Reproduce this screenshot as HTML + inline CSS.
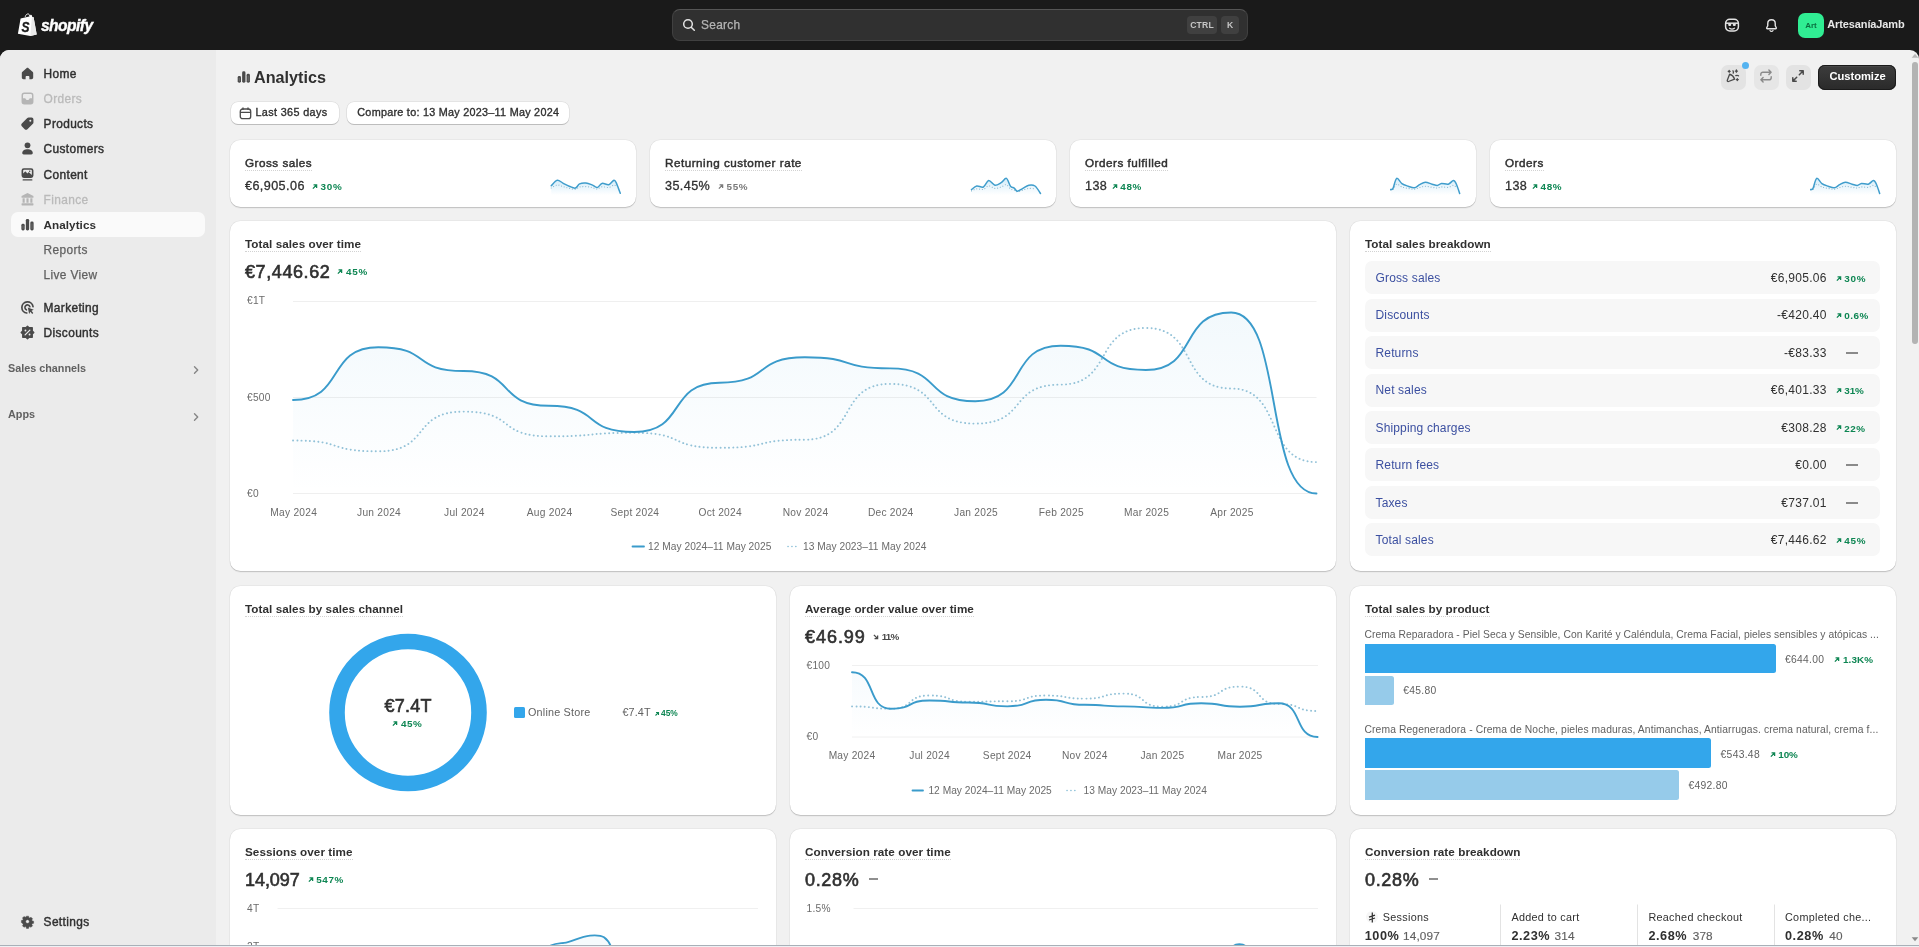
<!DOCTYPE html>
<html lang="en"><head><meta charset="utf-8"><title>Analytics</title>
<style>
*{box-sizing:border-box}
html,body{margin:0;padding:0}
body{width:1919px;height:947px;overflow:hidden;position:relative;background:#1a1a1a;font-family:"Liberation Sans",sans-serif;font-size:11.7px;color:#303030;line-height:18px}
.a{position:absolute}
.t{position:absolute;white-space:nowrap;line-height:18px;height:18px}
.b{font-weight:700}
.m{-webkit-text-stroke:.45px currentColor;letter-spacing:.42px}
.ttl.m{letter-spacing:.5px}
.sub{color:#616161}
.g{color:#0e8653}
svg{display:block;overflow:visible}
.ar{display:inline-block;width:7.5px;height:7.5px;vertical-align:-0.3px;margin-right:2.2px}
#top{left:0;top:0;width:1919px;height:50px;background:#1a1a1a}
.nav{position:absolute;left:43.6px;margin-top:.7px;white-space:nowrap;line-height:18px;height:18px;font-weight:400;font-size:11.9px;color:#303030;-webkit-text-stroke:.42px currentColor;letter-spacing:.36px}
.nav.dis{color:#bababa;-webkit-text-stroke:.3px #bababa}
.nav.sel{font-weight:700;font-size:11.7px;-webkit-text-stroke:0;letter-spacing:.05px}
.nav.subn{font-weight:400;color:#616161;-webkit-text-stroke:.25px #616161;letter-spacing:.35px}
.ico{position:absolute;left:18.8px;width:17px;height:17px;margin-top:.9px;fill:#4a4a4a}
.ico.dis{fill:#b5b5b5}
.sec{position:absolute;left:8px;font-size:10.8px;font-weight:700;color:#616161;white-space:nowrap;line-height:16px}
.card{position:absolute;background:#fff;border-radius:10.5px;box-shadow:0 1px 0 0 rgba(26,26,26,.14),0 2px 0 0 rgba(26,26,26,.03),0 0 0 .6px rgba(0,0,0,.07)}
.ttl{position:absolute;white-space:nowrap;font-weight:700;font-size:11.7px;line-height:18px;height:18px;color:#303030;border-bottom:0;letter-spacing:.06px}
.ttl:after{content:"";position:absolute;left:0;right:0;bottom:1px;border-bottom:1px dotted #d2d2d2}
.big{position:absolute;white-space:nowrap;font-weight:400;-webkit-text-stroke:.62px currentColor;font-size:18px;line-height:24px;height:24px;color:#303030;letter-spacing:.1px}
.trend{position:absolute;white-space:nowrap;font-weight:700;font-size:9.9px;line-height:16px;height:16px;color:#0e8653;letter-spacing:.7px;margin-top:.3px}
.trend.n{color:#7a7a7a}
.ax{position:absolute;white-space:nowrap;font-size:10.2px;line-height:14px;height:14px;color:#6b6b6b;letter-spacing:.25px;margin-top:1.3px}
.lg{letter-spacing:.03px}
.axc{transform:translateX(-50%)}
.brow{position:absolute;left:1365px;margin-top:-.5px;width:515px;height:33px;background:#f7f7f7;border-radius:7px}
.brow .l{position:absolute;left:10.5px;top:7.8px;line-height:18px;font-size:12px;color:#3b4fa0;letter-spacing:.15px;white-space:nowrap}
.brow .v{position:absolute;right:53.2px;top:7.8px;line-height:18px;font-size:12px;color:#303030;letter-spacing:.3px;white-space:nowrap}
.brow .p{position:absolute;left:469.6px;top:9.8px;line-height:16px;font-size:9.9px;font-weight:700;color:#0e8653;white-space:nowrap;letter-spacing:.8px}
.brow .d{display:none}
.dash{position:absolute;height:1.5px;width:9.5px;background:#8f8f8f}
.mv{font-size:12.6px;-webkit-text-stroke:.3px #303030;letter-spacing:.42px;margin-top:0}
.pl{font-size:10.300px;letter-spacing:.05px;margin-top:.8px}
.pv{font-size:10.300px;letter-spacing:.3px}
.cl{font-size:10.800px;letter-spacing:.3px;color:#303030}
.cv{font-size:12.700px;letter-spacing:.55px}
.cn{font-size:11.800px;letter-spacing:.15px;margin-left:-1px;-webkit-text-stroke:.15px currentColor}
#wrap{position:absolute;left:0;top:0;width:1919px;height:947px;will-change:transform;transform:translateZ(0)}

.ttl.m{letter-spacing:.5px}

</style></head>
<body>
<div id="wrap">
<div id="top" class="a">
  <svg class="a" style="left:17px;top:13px" width="21" height="24" viewBox="0 0 21 24">
    <path d="M3.6 5.6L12.2 3.6L13.2 2.2C13.6 1.6 14.6 1.7 14.9 2.5L15.3 4.1L16.6 4.2L19.7 21.4L13.3 23L0.9 20.7Z" fill="#fff"/>
    <path d="M14.9 4.1L16.6 4.2L19.7 21.4L13.3 23Z" fill="#e8e8e8"/>
    <path d="M8.2 3.9C8.6 2 9.8 .9 11 .9C11.9 .9 12.4 1.6 12.6 3" fill="none" stroke="#fff" stroke-width=".9"/>
    <text transform="translate(4.400,18.600) scale(.8,1)" font-family="Liberation Sans, sans-serif" font-weight="700" font-style="italic" font-size="15" stroke="#1a1a1a" stroke-width=".35" fill="#1a1a1a">S</text>
  </svg>
  <div class="t" style="left:40.8px;top:13px;height:24px;line-height:24px;font-size:17.3px;font-weight:700;font-style:italic;color:#fff;letter-spacing:-.6px;-webkit-text-stroke:.45px #fff;transform:scaleX(.9);transform-origin:0 50%">shopify</div>
  <div class="a" style="left:672px;top:9px;width:576px;height:32px;background:#303030;border:1px solid #404040;border-top-color:#555;border-radius:8px"></div>
  <svg class="a" style="left:682px;top:18px" width="14" height="14" viewBox="0 0 14 14"><circle cx="6" cy="6" r="4.3" fill="none" stroke="#e3e3e3" stroke-width="1.5"/><path d="M9.2 9.2L12.3 12.3" stroke="#e3e3e3" stroke-width="1.5" stroke-linecap="round"/></svg>
  <div class="t" style="left:701px;top:16px;color:#b5b5b5;font-size:11.9px;-webkit-text-stroke:.25px #b5b5b5;letter-spacing:.3px">Search</div>
  <div class="a" style="left:1187px;top:16px;width:30px;height:18px;background:#404040;border-radius:4px;color:#c6c6c6;font-size:8.6px;font-weight:700;line-height:18px;text-align:center;letter-spacing:.2px">CTRL</div>
  <div class="a" style="left:1221px;top:16px;width:18px;height:18px;background:#404040;border-radius:4px;color:#c6c6c6;font-size:8.6px;font-weight:700;line-height:18px;text-align:center">K</div>
  <!-- sidekick -->
  <svg class="a" style="left:1724px;top:17px" width="16" height="16" viewBox="0 0 16 16">
    <rect x="1.6" y="2.2" width="12.8" height="11.8" rx="4.2" fill="none" stroke="#e3e3e3" stroke-width="1.5"/>
    <path d="M2 6.2H14" stroke="#e3e3e3" stroke-width="1.5"/>
    <rect x="4.2" y="6.6" width="3" height="2.3" rx=".8" fill="#e3e3e3"/><rect x="8.8" y="6.6" width="3" height="2.3" rx=".8" fill="#e3e3e3"/>
    <path d="M5.6 11.2C7 12.2 9 12.2 10.400 11.2" fill="none" stroke="#e3e3e3" stroke-width="1.2" stroke-linecap="round"/>
  </svg>
  <!-- bell -->
  <svg class="a" style="left:1763.500px;top:18px" width="15" height="15" viewBox="0 0 16 16">
    <path d="M8 1.800C5.500 1.800 4 3.700 4 6V8.300L2.900 10.400C2.700 10.900 3 11.400 3.500 11.400H12.500C13 11.400 13.300 10.900 13.100 10.400L12 8.300V6C12 3.700 10.500 1.800 8 1.800Z" fill="none" stroke="#e3e3e3" stroke-width="1.5" stroke-linejoin="round"/>
    <path d="M6.400 13.300C6.800 14 7.400 14.300 8 14.300S9.200 14 9.600 13.300" fill="none" stroke="#e3e3e3" stroke-width="1.4" stroke-linecap="round"/>
  </svg>
  <div class="a" style="left:1798px;top:13px;width:26px;height:25px;background:#30ed93;border-radius:7px;color:#0a7040;font-size:8px;font-weight:700;line-height:25px;text-align:center;letter-spacing:-.1px">Art</div>
  <div class="t" style="left:1827.300px;top:15px;color:#e8e8e8;font-weight:700;font-size:11px;letter-spacing:-.12px">ArtesaníaJamb</div>
</div>

<div class="a" id="frame" style="left:0;top:50px;width:1919px;height:897px;background:#f1f1f1;border-radius:9px 9px 0 0"></div>
<div class="a" id="side" style="left:0;top:50px;width:216px;height:897px;background:#ebebeb;border-radius:9px 0 0 0"></div>
<div class="a" style="left:11px;top:212px;width:194px;height:25px;background:#fafafa;border-radius:7px"></div>
<svg class="ico " style="top:64px" viewBox="0 0 20 20"><path d="M3.300 9.400c0-.6.300-1.200.8-1.600l4.700-4.100c.7-.6 1.700-.6 2.400 0l4.700 4.100c.5.400.8 1 .8 1.600v5.400c0 1.100-.9 2-2 2h-2.500v-2.800c0-.7-.5-1.200-1.200-1.200h-2c-.7 0-1.200.5-1.200 1.200v2.800H5.300c-1.100 0-2-.9-2-2z"/></svg>
<div class="nav " style="top:64px">Home</div>
<svg class="ico dis" style="top:89px" viewBox="0 0 20 20"><path fill-rule="evenodd" d="M3 6.250A3.250 3.250 0 0 1 6.250 3h7.500A3.250 3.250 0 0 1 17 6.250v7.500A3.250 3.250 0 0 1 13.750 17h-7.500A3.250 3.250 0 0 1 3 13.750zM6.250 4.700C5.400 4.700 4.700 5.400 4.700 6.250V9.600h2.300c.4 0 .75.3.85.7.2.9 1.100 1.550 2.150 1.550s1.950-.65 2.150-1.550c.1-.4.450-.7.850-.7H15.300V6.250c0-.85-.7-1.550-1.550-1.550z"/></svg>
<div class="nav dis" style="top:89px">Orders</div>
<svg class="ico " style="top:114px" viewBox="0 0 20 20"><path fill-rule="evenodd" d="M11.300 3c-.6 0-1.150.25-1.550.65L3.300 10.100c-.9.900-.9 2.300 0 3.200l3.400 3.400c.9.900 2.300.9 3.200 0l6.450-6.450c.4-.4.650-.95.650-1.550V5.200C17 4 16 3 14.800 3zM13.300 7.900a1.200 1.200 0 1 0 0-2.400 1.200 1.200 0 0 0 0 2.400z"/></svg>
<div class="nav " style="top:114px">Products</div>
<svg class="ico " style="top:139px" viewBox="0 0 20 20"><circle cx="10" cy="6.300" r="3.400"/><path d="M3.800 15.300c0-2.700 2.700-4.500 6.200-4.500s6.200 1.800 6.200 4.500c0 .9-.7 1.700-1.700 1.700H5.500c-1 0-1.700-.8-1.700-1.700z"/></svg>
<div class="nav " style="top:139px">Customers</div>
<svg class="ico " style="top:165px" viewBox="0 0 20 20"><path fill-rule="evenodd" d="M3 5.200A2.700 2.700 0 0 1 5.700 2.500h8.600A2.700 2.700 0 0 1 17 5.200v6.100a2.700 2.700 0 0 1-2.700 2.700H5.700A2.700 2.700 0 0 1 3 11.300zM4.900 8.700l2-1.900c.3-.3.800-.3 1.100 0l1.900 1.900 1-1c.3-.3.800-.3 1.100 0l3.100 2.900V5.400c0-.6-.4-1-1-1H5.900c-.6 0-1 .4-1 1zM12.600 5.300a.9.900 0 1 1 0 1.800.9.900 0 0 1 0-1.800z"/><rect x="4.200" y="15.600" width="11.600" height="1.500" rx=".7"/></svg>
<div class="nav " style="top:165px">Content</div>
<svg class="ico dis" style="top:190px" viewBox="0 0 20 20"><path d="M10 2.400l7 3.400v2H3v-2z"/><rect x="4.200" y="8.600" width="2.500" height="5.200"/><rect x="8.750" y="8.600" width="2.500" height="5.200"/><rect x="13.300" y="8.600" width="2.500" height="5.200"/><rect x="3" y="14.400" width="14" height="2.600" rx=".7"/></svg>
<div class="nav dis" style="top:190px">Finance</div>
<svg class="ico " style="top:215px" viewBox="0 0 20 20"><rect x="2.800" y="9.200" width="3.900" height="7.800" rx="1.700"/><rect x="8.050" y="3.400" width="3.900" height="13.600" rx="1.700"/><rect x="13.300" y="6.400" width="3.900" height="10.600" rx="1.700"/><rect x="4.100" y="11" width="1.300" height="4.200" rx=".6" fill="#6a6a6a"/><rect x="14.600" y="8.400" width="1.300" height="6.800" rx=".6" fill="#6a6a6a"/></svg>
<div class="nav sel" style="top:215px">Analytics</div>
<div class="nav subn" style="top:240px">Reports</div>
<div class="nav subn" style="top:265px">Live View</div>
<svg class="ico " style="top:298px" viewBox="0 0 20 20"><path d="M9.200 16.500A6.600 6.600 0 1 1 16.500 9" fill="none" stroke="#4a4a4a" stroke-width="2" stroke-linecap="round"/><path d="M8.700 12.700A3 3 0 1 1 12.800 9" fill="none" stroke="#4a4a4a" stroke-width="1.900" stroke-linecap="round"/><path d="M10.400 10.100l7 2.500-2.700 1.300 2.100 2.600-1.300 1-2.100-2.600-1.500 2.600z"/></svg>
<div class="nav " style="top:298px">Marketing</div>
<svg class="ico " style="top:323px" viewBox="0 0 20 20"><path d="M10.0 2.6L11.8 4.4L15.6 4.4L15.6 8.2L17.4 10.0L15.6 11.8L15.6 15.6L11.8 15.6L10.0 17.4L8.2 15.6L4.4 15.6L4.4 11.8L2.6 10.0L4.4 8.2L4.4 4.4L8.2 4.4Z" stroke="#4a4a4a" stroke-width="1.600" stroke-linejoin="round"/><path d="M7.200 12.800l5.600-5.600" stroke="#ebebeb" stroke-width="1.500" stroke-linecap="round"/><circle cx="7.600" cy="7.700" r="1.100" fill="#ebebeb"/><circle cx="12.400" cy="12.300" r="1.100" fill="#ebebeb"/></svg>
<div class="nav " style="top:323px">Discounts</div>
<svg class="ico " style="top:912px;transform:scale(.9)" viewBox="0 0 20 20"><path fill-rule="evenodd" d="M8.600 3h2.800l.4 1.900 1.100.5 1.700-1 2 2-1 1.700.5 1.100 1.900.4v2.800l-1.900.4-.5 1.100 1 1.700-2 2-1.700-1-1.100.5-.4 1.900H8.600l-.4-1.900-1.100-.5-1.700 1-2-2 1-1.700-.5-1.100L2 11.400V8.600l1.900-.4.500-1.100-1-1.700 2-2 1.700 1 1.100-.5zM10 7.600a2.400 2.400 0 1 0 0 4.800 2.400 2.400 0 0 0 0-4.800z" stroke="#4a4a4a" stroke-width=".6" stroke-linejoin="round"/></svg>
<div class="nav " style="top:912px">Settings</div>
<div class="sec" style="top:360px">Sales channels</div>
<div class="sec" style="top:406px">Apps</div>
<svg class="a" style="left:192px;top:365px" width="8" height="10" viewBox="0 0 8 10"><path d="M2.500 1.800L5.700 5 2.500 8.200" fill="none" stroke="#858585" stroke-width="1.400" stroke-linecap="round" stroke-linejoin="round"/></svg>
<svg class="a" style="left:192px;top:412px" width="8" height="10" viewBox="0 0 8 10"><path d="M2.500 1.800L5.700 5 2.500 8.200" fill="none" stroke="#858585" stroke-width="1.400" stroke-linecap="round" stroke-linejoin="round"/></svg>
<svg class="a" style="left:236.600px;top:70.300px;fill:#4a4a4a" width="13.600" height="13.600" viewBox="2 2 16 16"><rect x="2.800" y="9.200" width="3.900" height="7.800" rx="1.700"/><rect x="8.050" y="3.400" width="3.900" height="13.600" rx="1.700"/><rect x="13.300" y="6.400" width="3.900" height="10.600" rx="1.700"/><rect x="4.100" y="11" width="1.300" height="4.200" rx=".6" fill="#6a6a6a"/><rect x="14.600" y="8.400" width="1.300" height="6.800" rx=".6" fill="#6a6a6a"/></svg>
<div class="t b" style="left:254px;top:65px;height:24px;line-height:24px;font-size:16.2px;color:#303030">Analytics</div>
<!-- filter buttons -->
<div class="a" style="left:231px;top:102px;width:108px;height:22.300px;background:#fff;border-radius:7px;box-shadow:0 1px 0 0 #bdbdbd,0 0 0 .6px #d8d8d8"></div>
<svg class="a" style="left:239px;top:106.600px" width="13" height="13" viewBox="0 0 13 13"><rect x="1.300" y="2" width="10.400" height="9.700" rx="2.300" fill="none" stroke="#4a4a4a" stroke-width="1.300"/><path d="M1.500 5.400H11.500M4 .9V2.400M9 .9V2.400" stroke="#4a4a4a" stroke-width="1.300" stroke-linecap="round"/></svg>
<div class="t" style="left:255.500px;top:103.400px;font-size:10.800px;-webkit-text-stroke:.35px #303030;letter-spacing:.36px">Last 365 days</div>
<div class="a" style="left:347px;top:102px;width:222px;height:22.300px;background:#fff;border-radius:7px;box-shadow:0 1px 0 0 #bdbdbd,0 0 0 .6px #d8d8d8"></div>
<div class="t" style="left:357.300px;top:103.400px;font-size:10.800px;-webkit-text-stroke:.35px #303030;letter-spacing:.27px">Compare to: 13 May 2023–11 May 2024</div>
<!-- action buttons -->
<div class="a" style="left:1721px;top:65px;width:25px;height:24.500px;background:#e3e3e3;border-radius:7px"></div>
<div class="a" style="left:1754px;top:65px;width:25px;height:24.500px;background:#e6e6e6;border-radius:7px"></div>
<div class="a" style="left:1786.300px;top:65px;width:24.700px;height:24.500px;background:#e3e3e3;border-radius:7px"></div>
<div class="a" style="left:1741.600px;top:61.800px;width:7.600px;height:7.600px;border-radius:50%;background:#55b3f0"></div>
<svg class="a" style="left:1725.300px;top:68.400px" width="16" height="16" viewBox="0 0 16 16" fill="none" stroke="#4a4a4a" stroke-width="1.300" stroke-linecap="round" stroke-linejoin="round"><path d="M4.600 6.200L2.300 12.300c-.3.800.4 1.500 1.200 1.200L9.600 11.200C8.800 8.700 7 7 4.600 6.200Z"/><path d="M4.200 2.300V4.300M3.200 3.300H5.200M11.400 2V4.200M10.300 3.100H12.500M12.300 10.600V12.600M11.300 11.600H13.300"/><path d="M8.200 5.200C8.600 4.200 8.500 3.400 8 2.800M10.800 7.600C11.800 7.200 12.800 7.300 13.500 7.800"/></svg>
<svg class="a" style="left:1758.200px;top:68.300px" width="16" height="16" viewBox="0 0 16 16" fill="none" stroke="#8a8a8a" stroke-width="1.400" stroke-linecap="round" stroke-linejoin="round"><path d="M2.800 7.300V6.300C2.800 5.100 3.700 4.200 4.900 4.200H13M10.900 2L13.100 4.200 10.900 6.400"/><path d="M13.200 8.700V9.700C13.200 10.900 12.300 11.800 11.100 11.800H3M5.100 9.600L2.900 11.800 5.100 14"/></svg>
<svg class="a" style="left:1790.300px;top:68.400px" width="16" height="16" viewBox="0 0 16 16" fill="none" stroke="#4a4a4a" stroke-width="1.500" stroke-linecap="round" stroke-linejoin="round"><path d="M9.300 6.700L13 3M9.800 2.800H13.200V6.200M6.700 9.300L3 13M2.800 9.800V13.200H6.200"/></svg>
<div class="a" style="left:1818px;top:64.500px;width:78px;height:25.500px;background:linear-gradient(#3d3d3d,#2a2a2a);border-radius:7px;box-shadow:inset 0 0 0 1px #1a1a1a,inset 0 1.500px 0 0 #555"></div>
<div class="t b" style="left:1829.500px;top:66.800px;color:#fff;font-size:11.200px;letter-spacing:-.05px">Customize</div>
<!-- scrollbar -->
<div class="a" style="left:1912px;top:62px;width:6.200px;height:281.700px;background:#b3b3b3;border-radius:4px"></div>
<svg class="a" style="left:1911px;top:52.500px" width="8" height="6" viewBox="0 0 8 6"><path d="M4 .8L7.300 4.800H.7Z" fill="#b8b8b8"/></svg>
<svg class="a" style="left:1911px;top:936px" width="8" height="6" viewBox="0 0 8 6"><path d="M4 5.200L7.300 1.200H.7Z" fill="#8a8a8a"/></svg>

<svg class="a" style="left:0;top:0;pointer-events:none" width="0" height="0"><defs><linearGradient id="spg" x1="0" y1="0" x2="0" y2="1"><stop offset="0" stop-color="#5bb8ea" stop-opacity=".26"/><stop offset="1" stop-color="#5bb8ea" stop-opacity="0"/></linearGradient></defs></svg>
<div class="card" style="left:230px;top:140px;width:406px;height:67px"></div>
<div class="ttl m" style="left:245px;top:154px;font-weight:400">Gross sales</div>
<div class="t mv" id="mv230" style="left:245px;top:177px">€6,905.06</div>
<div class="trend " id="mt230" style="left:310.9px;top:178.600px"><svg class="ar" viewBox="0 0 10 10"><path d="M2.5 7.5L7.3 2.7M3.4 2.5H7.5V6.6" fill="none" stroke="currentColor" stroke-width="1.7" stroke-linecap="butt"/></svg>30%</div>
<svg class="a" style="left:0;top:0" width="1919" height="210" viewBox="0 0 1919 210"><path d="M551.2,185.7C552.2,184.8 555.2,180.6 557.2,180.2C559.2,179.8 560.9,182.1 562.9,183.1C564.9,184.1 567.1,185.4 569.2,186.2C571.3,187.0 573.7,188.5 575.4,188.1C577.1,187.7 577.9,184.7 579.6,183.9C581.4,183.1 583.8,182.9 585.9,183.1C588.0,183.3 590.2,184.2 592.1,184.9C594.0,185.6 595.6,187.8 597.3,187.5C598.9,187.2 600.1,183.9 602.0,183.4C603.9,182.9 606.8,185.2 608.8,184.7C610.8,184.2 612.7,180.4 614.0,180.2C615.3,180.0 615.6,181.4 616.6,183.6C617.6,185.8 619.7,191.7 620.3,193.3L620.3,195L551.2,195Z" fill="url(#spg)"/><path d="M551.2,188.0C552.2,187.5 555.2,185.2 557.2,185.0C559.2,184.8 560.9,186.0 562.9,186.6C564.9,187.1 567.1,187.8 569.2,188.3C571.3,188.8 573.7,189.6 575.4,189.3C577.1,189.1 577.9,187.5 579.6,187.0C581.4,186.6 583.8,186.5 585.9,186.6C588.0,186.7 590.2,187.2 592.1,187.6C594.0,188.0 595.6,189.2 597.3,189.0C598.9,188.9 600.1,187.0 602.0,186.8C603.9,186.5 606.8,187.8 608.8,187.5C610.8,187.2 612.7,185.1 614.0,185.0C615.3,184.9 616.2,186.6 616.6,186.9" fill="none" stroke="#8fb9cf" stroke-width="1.100" stroke-dasharray=".1 2.700" stroke-linecap="round"/><path d="M551.2,185.7C552.2,184.8 555.2,180.6 557.2,180.2C559.2,179.8 560.9,182.1 562.9,183.1C564.9,184.1 567.1,185.4 569.2,186.2C571.3,187.0 573.7,188.5 575.4,188.1C577.1,187.7 577.9,184.7 579.6,183.9C581.4,183.1 583.8,182.9 585.9,183.1C588.0,183.3 590.2,184.2 592.1,184.9C594.0,185.6 595.6,187.8 597.3,187.5C598.9,187.2 600.1,183.9 602.0,183.4C603.9,182.9 606.8,185.2 608.8,184.7C610.8,184.2 612.7,180.4 614.0,180.2C615.3,180.0 615.6,181.4 616.6,183.6C617.6,185.8 619.7,191.7 620.3,193.3" fill="none" stroke="#3f9dcc" stroke-width="1.500" stroke-linecap="round" stroke-linejoin="round"/></svg>
<div class="card" style="left:650px;top:140px;width:406px;height:67px"></div>
<div class="ttl m" style="left:665px;top:154px;font-weight:400">Returning customer rate</div>
<div class="t mv" id="mv650" style="left:665px;top:177px">35.45%</div>
<div class="trend n" id="mt650" style="left:716.8px;top:178.600px"><svg class="ar" viewBox="0 0 10 10"><path d="M2.5 7.5L7.3 2.7M3.4 2.5H7.5V6.6" fill="none" stroke="currentColor" stroke-width="1.7" stroke-linecap="butt"/></svg>55%</div>
<svg class="a" style="left:0;top:0" width="1919" height="210" viewBox="0 0 1919 210"><path d="M971.5,189.6C972.4,189.0 974.7,186.4 976.7,186.0C978.7,185.6 981.4,187.9 983.4,187.0C985.4,186.1 986.8,180.8 988.7,180.5C990.6,180.2 992.8,184.8 994.9,185.2C997.0,185.5 999.3,183.7 1001.2,182.6C1003.1,181.5 1004.9,177.8 1006.4,178.4C1007.9,179.0 1009.2,184.6 1010.5,186.2C1011.8,187.8 1013.1,187.3 1014.2,188.1C1015.3,188.9 1015.9,191.1 1017.3,191.2C1018.7,191.3 1020.6,189.6 1022.5,188.6C1024.4,187.6 1026.7,185.6 1028.8,185.2C1030.9,184.8 1033.0,184.6 1035.0,186.0C1037.0,187.4 1039.6,192.2 1040.5,193.5L1040.5,195L971.5,195Z" fill="url(#spg)"/><path d="M971.5,190.9C972.4,190.5 974.7,189.1 976.7,188.9C978.7,188.6 981.4,189.9 983.4,189.4C985.4,188.9 986.8,186.0 988.7,185.9C990.6,185.7 992.8,188.2 994.9,188.4C997.0,188.6 999.3,187.6 1001.2,187.0C1003.1,186.4 1004.9,184.4 1006.4,184.7C1007.9,185.0 1009.2,188.1 1010.5,189.0C1011.8,189.9 1013.1,189.6 1014.2,190.0C1015.3,190.5 1015.9,191.7 1017.3,191.7C1018.7,191.8 1020.6,190.9 1022.5,190.3C1024.4,189.8 1026.7,188.7 1028.8,188.4C1030.9,188.2 1034.0,188.8 1035.0,188.9" fill="none" stroke="#8fb9cf" stroke-width="1.100" stroke-dasharray=".1 2.700" stroke-linecap="round"/><path d="M971.5,189.6C972.4,189.0 974.7,186.4 976.7,186.0C978.7,185.6 981.4,187.9 983.4,187.0C985.4,186.1 986.8,180.8 988.7,180.5C990.6,180.2 992.8,184.8 994.9,185.2C997.0,185.5 999.3,183.7 1001.2,182.6C1003.1,181.5 1004.9,177.8 1006.4,178.4C1007.9,179.0 1009.2,184.6 1010.5,186.2C1011.8,187.8 1013.1,187.3 1014.2,188.1C1015.3,188.9 1015.9,191.1 1017.3,191.2C1018.7,191.3 1020.6,189.6 1022.5,188.6C1024.4,187.6 1026.7,185.6 1028.8,185.2C1030.9,184.8 1033.0,184.6 1035.0,186.0C1037.0,187.4 1039.6,192.2 1040.5,193.5" fill="none" stroke="#3f9dcc" stroke-width="1.500" stroke-linecap="round" stroke-linejoin="round"/></svg>
<div class="card" style="left:1070px;top:140px;width:406px;height:67px"></div>
<div class="ttl m" style="left:1085px;top:154px;font-weight:400">Orders fulfilled</div>
<div class="t mv" id="mv1070" style="left:1085px;top:177px">138</div>
<div class="trend " id="mt1070" style="left:1110.5px;top:178.600px"><svg class="ar" viewBox="0 0 10 10"><path d="M2.5 7.5L7.3 2.7M3.4 2.5H7.5V6.6" fill="none" stroke="currentColor" stroke-width="1.7" stroke-linecap="butt"/></svg>48%</div>
<svg class="a" style="left:0;top:0" width="1919" height="210" viewBox="0 0 1919 210"><path d="M1390.7,189.4C1391.1,189.2 1392.0,190.1 1393.0,188.3C1394.0,186.5 1395.2,179.2 1396.7,178.4C1398.2,177.6 1400.0,182.3 1401.9,183.6C1403.8,184.9 1406.0,185.5 1408.1,186.2C1410.2,186.9 1412.5,188.1 1414.4,187.8C1416.3,187.6 1417.8,185.6 1419.6,184.7C1421.4,183.8 1423.2,182.4 1425.3,182.3C1427.4,182.2 1430.1,183.7 1432.1,184.2C1434.1,184.7 1435.7,185.6 1437.3,185.5C1438.9,185.4 1439.7,183.6 1441.5,183.4C1443.3,183.2 1446.3,184.7 1448.3,184.2C1450.3,183.7 1452.1,180.4 1453.5,180.5C1454.9,180.6 1455.6,182.5 1456.6,184.7C1457.6,186.9 1459.2,192.0 1459.7,193.5L1459.7,195L1390.7,195Z" fill="url(#spg)"/><path d="M1390.7,190.2C1391.1,190.1 1392.0,190.6 1393.0,189.6C1394.0,188.6 1395.2,184.6 1396.7,184.2C1398.2,183.7 1400.0,186.3 1401.9,187.0C1403.8,187.7 1406.0,188.1 1408.1,188.4C1410.2,188.8 1412.5,189.5 1414.4,189.3C1416.3,189.2 1417.8,188.1 1419.6,187.6C1421.4,187.1 1423.2,186.3 1425.3,186.3C1427.4,186.3 1430.1,187.0 1432.1,187.3C1434.1,187.6 1435.7,188.1 1437.3,188.1C1438.9,188.0 1439.7,187.0 1441.5,186.9C1443.3,186.8 1446.3,187.6 1448.3,187.3C1450.3,187.1 1452.1,185.3 1453.5,185.3C1454.9,185.4 1456.1,187.2 1456.6,187.6" fill="none" stroke="#8fb9cf" stroke-width="1.100" stroke-dasharray=".1 2.700" stroke-linecap="round"/><path d="M1390.7,189.4C1391.1,189.2 1392.0,190.1 1393.0,188.3C1394.0,186.5 1395.2,179.2 1396.7,178.4C1398.2,177.6 1400.0,182.3 1401.9,183.6C1403.8,184.9 1406.0,185.5 1408.1,186.2C1410.2,186.9 1412.5,188.1 1414.4,187.8C1416.3,187.6 1417.8,185.6 1419.6,184.7C1421.4,183.8 1423.2,182.4 1425.3,182.3C1427.4,182.2 1430.1,183.7 1432.1,184.2C1434.1,184.7 1435.7,185.6 1437.3,185.5C1438.9,185.4 1439.7,183.6 1441.5,183.4C1443.3,183.2 1446.3,184.7 1448.3,184.2C1450.3,183.7 1452.1,180.4 1453.5,180.5C1454.9,180.6 1455.6,182.5 1456.6,184.7C1457.6,186.9 1459.2,192.0 1459.7,193.5" fill="none" stroke="#3f9dcc" stroke-width="1.500" stroke-linecap="round" stroke-linejoin="round"/></svg>
<div class="card" style="left:1490px;top:140px;width:406px;height:67px"></div>
<div class="ttl m" style="left:1505px;top:154px;font-weight:400">Orders</div>
<div class="t mv" id="mv1490" style="left:1505px;top:177px">138</div>
<div class="trend " id="mt1490" style="left:1530.8px;top:178.600px"><svg class="ar" viewBox="0 0 10 10"><path d="M2.5 7.5L7.3 2.7M3.4 2.5H7.5V6.6" fill="none" stroke="currentColor" stroke-width="1.7" stroke-linecap="butt"/></svg>48%</div>
<svg class="a" style="left:0;top:0" width="1919" height="210" viewBox="0 0 1919 210"><path d="M1810.7,189.4C1811.1,189.2 1812.0,190.1 1813.0,188.3C1814.0,186.5 1815.2,179.2 1816.7,178.4C1818.2,177.6 1820.0,182.3 1821.9,183.6C1823.8,184.9 1826.0,185.5 1828.1,186.2C1830.2,186.9 1832.5,188.1 1834.4,187.8C1836.3,187.6 1837.8,185.6 1839.6,184.7C1841.4,183.8 1843.2,182.4 1845.3,182.3C1847.4,182.2 1850.1,183.7 1852.1,184.2C1854.1,184.7 1855.7,185.6 1857.3,185.5C1858.9,185.4 1859.7,183.6 1861.5,183.4C1863.3,183.2 1866.3,184.7 1868.3,184.2C1870.3,183.7 1872.1,180.4 1873.5,180.5C1874.9,180.6 1875.6,182.5 1876.6,184.7C1877.6,186.9 1879.2,192.0 1879.7,193.5L1879.7,195L1810.7,195Z" fill="url(#spg)"/><path d="M1810.7,190.2C1811.1,190.1 1812.0,190.6 1813.0,189.6C1814.0,188.6 1815.2,184.6 1816.7,184.2C1818.2,183.7 1820.0,186.3 1821.9,187.0C1823.8,187.7 1826.0,188.1 1828.1,188.4C1830.2,188.8 1832.5,189.5 1834.4,189.3C1836.3,189.2 1837.8,188.1 1839.6,187.6C1841.4,187.1 1843.2,186.3 1845.3,186.3C1847.4,186.3 1850.1,187.0 1852.1,187.3C1854.1,187.6 1855.7,188.1 1857.3,188.1C1858.9,188.0 1859.7,187.0 1861.5,186.9C1863.3,186.8 1866.3,187.6 1868.3,187.3C1870.3,187.1 1872.1,185.3 1873.5,185.3C1874.9,185.4 1876.1,187.2 1876.6,187.6" fill="none" stroke="#8fb9cf" stroke-width="1.100" stroke-dasharray=".1 2.700" stroke-linecap="round"/><path d="M1810.7,189.4C1811.1,189.2 1812.0,190.1 1813.0,188.3C1814.0,186.5 1815.2,179.2 1816.7,178.4C1818.2,177.6 1820.0,182.3 1821.9,183.6C1823.8,184.9 1826.0,185.5 1828.1,186.2C1830.2,186.9 1832.5,188.1 1834.4,187.8C1836.3,187.6 1837.8,185.6 1839.6,184.7C1841.4,183.8 1843.2,182.4 1845.3,182.3C1847.4,182.2 1850.1,183.7 1852.1,184.2C1854.1,184.7 1855.7,185.6 1857.3,185.5C1858.9,185.4 1859.7,183.6 1861.5,183.4C1863.3,183.2 1866.3,184.7 1868.3,184.2C1870.3,183.7 1872.1,180.4 1873.5,180.5C1874.9,180.6 1875.6,182.5 1876.6,184.7C1877.6,186.9 1879.2,192.0 1879.7,193.5" fill="none" stroke="#3f9dcc" stroke-width="1.500" stroke-linecap="round" stroke-linejoin="round"/></svg>
<div class="card" style="left:230px;top:221px;width:1106px;height:350px"></div>
<div class="ttl" style="left:245px;top:235px">Total sales over time</div>
<div class="big" style="left:245px;top:259.700px;letter-spacing:.59px">€7,446.62</div>
<div class="trend" style="left:336.400px;top:264.100px"><svg class="ar" viewBox="0 0 10 10"><path d="M2.5 7.5L7.3 2.7M3.4 2.5H7.5V6.6" fill="none" stroke="currentColor" stroke-width="1.7" stroke-linecap="butt"/></svg>45%</div>
<div class="ax" style="left:247px;top:293px">€1T</div>
<div class="ax" style="left:247px;top:389.5px">€500</div>
<div class="ax" style="left:247px;top:486px">€0</div>
<svg class="a" style="left:0;top:221px" width="1919" height="350" viewBox="0 221 1919 350">
<defs><linearGradient id="mg" x1="0" y1="312" x2="0" y2="493" gradientUnits="userSpaceOnUse"><stop offset="0" stop-color="#4aa9dc" stop-opacity=".07"/><stop offset="1" stop-color="#4aa9dc" stop-opacity="0"/></linearGradient></defs>
<path d="M293 301.500H1316.500M293 397.500H1316.500M293 493.500H1316.500" stroke="#efefef" stroke-width="1"/>
<path d="M293.0,400.0C345.9,400.0 325.4,347.2 378.3,347.2C431.2,347.2 410.7,371.0 463.6,371.0C516.5,371.0 496.0,405.8 548.9,405.8C601.8,405.8 581.3,432.0 634.2,432.0C687.0,432.0 666.6,382.7 719.5,382.7C772.3,382.7 751.9,357.3 804.8,357.3C857.6,357.3 837.2,368.4 890.0,368.4C942.9,368.4 922.5,401.2 975.3,401.2C1028.2,401.2 1007.7,345.7 1060.6,345.7C1113.5,345.7 1093.0,370.0 1145.9,370.0C1198.8,370.0 1178.3,312.5 1231.2,312.5C1284.1,312.5 1263.6,493.5 1316.5,493.5L1316.5,493.5L293.0,493.5Z" fill="url(#mg)"/>
<path d="M293.0,440.5C345.9,440.5 325.4,451.3 378.3,451.3C431.2,451.3 410.7,411.6 463.6,411.6C516.5,411.6 496.0,436.3 548.9,436.3C601.8,436.3 581.3,432.8 634.2,432.8C687.0,432.8 666.6,447.8 719.5,447.8C772.3,447.8 751.9,439.7 804.8,439.7C857.6,439.7 837.2,383.9 890.0,383.9C942.9,383.9 922.5,423.6 975.3,423.6C1028.2,423.6 1007.7,384.6 1060.6,384.6C1113.5,384.6 1093.0,328.0 1145.9,328.0C1198.8,328.0 1178.3,388.5 1231.2,388.5C1284.1,388.5 1263.6,462.1 1316.5,462.1" fill="none" stroke="#93c2d8" stroke-width="1.900" stroke-dasharray=".1 4.100" stroke-linecap="round"/>
<path d="M293.0,400.0C345.9,400.0 325.4,347.2 378.3,347.2C431.2,347.2 410.7,371.0 463.6,371.0C516.5,371.0 496.0,405.8 548.9,405.8C601.8,405.8 581.3,432.0 634.2,432.0C687.0,432.0 666.6,382.7 719.5,382.7C772.3,382.7 751.9,357.3 804.8,357.3C857.6,357.3 837.2,368.4 890.0,368.4C942.9,368.4 922.5,401.2 975.3,401.2C1028.2,401.2 1007.7,345.7 1060.6,345.7C1113.5,345.7 1093.0,370.0 1145.9,370.0C1198.8,370.0 1178.3,312.5 1231.2,312.5C1284.1,312.5 1263.6,493.5 1316.5,493.5" fill="none" stroke="#3a9bcb" stroke-width="1.900" stroke-linecap="round" stroke-linejoin="round"/>
<path d="M632.500 546.500H644" stroke="#3a9bcb" stroke-width="1.800" stroke-linecap="round"/>
<path d="M788 546.500H799" stroke="#86bdd6" stroke-width="1.500" stroke-dasharray=".1 3.800" stroke-linecap="round"/>
</svg>
<div class="ax axc" style="left:293.7px;top:505px">May 2024</div>
<div class="ax axc" style="left:379.0px;top:505px">Jun 2024</div>
<div class="ax axc" style="left:464.3px;top:505px">Jul 2024</div>
<div class="ax axc" style="left:549.6px;top:505px">Aug 2024</div>
<div class="ax axc" style="left:634.9px;top:505px">Sept 2024</div>
<div class="ax axc" style="left:720.2px;top:505px">Oct 2024</div>
<div class="ax axc" style="left:805.5px;top:505px">Nov 2024</div>
<div class="ax axc" style="left:890.7px;top:505px">Dec 2024</div>
<div class="ax axc" style="left:976.0px;top:505px">Jan 2025</div>
<div class="ax axc" style="left:1061.3px;top:505px">Feb 2025</div>
<div class="ax axc" style="left:1146.6px;top:505px">Mar 2025</div>
<div class="ax axc" style="left:1231.9px;top:505px">Apr 2025</div>
<div class="ax lg" style="left:648px;top:539px">12 May 2024–11 May 2025</div>
<div class="ax lg" style="left:803px;top:539px">13 May 2023–11 May 2024</div>
<div class="card" style="left:1350px;top:221px;width:546px;height:350px"></div>
<div class="ttl" style="left:1365px;top:235px">Total sales breakdown</div>
<div class="brow" style="top:261.6px"><span class="l">Gross sales</span><span class="v">€6,905.06</span><span class="p"><svg class="ar" viewBox="0 0 10 10"><path d="M2.5 7.5L7.3 2.7M3.4 2.5H7.5V6.6" fill="none" stroke="currentColor" stroke-width="1.7" stroke-linecap="butt"/></svg>30%</span></div>
<div class="brow" style="top:299.1px"><span class="l">Discounts</span><span class="v">-€420.40</span><span class="p" style="letter-spacing:.5px"><svg class="ar" viewBox="0 0 10 10"><path d="M2.5 7.5L7.3 2.7M3.4 2.5H7.5V6.6" fill="none" stroke="currentColor" stroke-width="1.7" stroke-linecap="butt"/></svg>0.6%</span></div>
<div class="brow" style="top:336.5px"><span class="l">Returns</span><span class="v">-€83.33</span><span class="d"></span></div>
<div class="brow" style="top:374.0px"><span class="l">Net sales</span><span class="v">€6,401.33</span><span class="p" style="letter-spacing:-.1px"><svg class="ar" viewBox="0 0 10 10"><path d="M2.5 7.5L7.3 2.7M3.4 2.5H7.5V6.6" fill="none" stroke="currentColor" stroke-width="1.7" stroke-linecap="butt"/></svg>31%</span></div>
<div class="brow" style="top:411.4px"><span class="l">Shipping charges</span><span class="v">€308.28</span><span class="p" style="letter-spacing:.45px"><svg class="ar" viewBox="0 0 10 10"><path d="M2.5 7.5L7.3 2.7M3.4 2.5H7.5V6.6" fill="none" stroke="currentColor" stroke-width="1.7" stroke-linecap="butt"/></svg>22%</span></div>
<div class="brow" style="top:448.9px"><span class="l">Return fees</span><span class="v">€0.00</span><span class="d"></span></div>
<div class="brow" style="top:486.3px"><span class="l">Taxes</span><span class="v">€737.01</span><span class="d"></span></div>
<div class="brow" style="top:523.8px"><span class="l">Total sales</span><span class="v">€7,446.62</span><span class="p"><svg class="ar" viewBox="0 0 10 10"><path d="M2.5 7.5L7.3 2.7M3.4 2.5H7.5V6.6" fill="none" stroke="currentColor" stroke-width="1.7" stroke-linecap="butt"/></svg>45%</span></div>
<div class="a bdash" style="left:1846px;top:352px;width:11.500px;height:1.500px;background:#8a8a8a"></div>
<div class="a bdash" style="left:1846px;top:464px;width:11.500px;height:1.500px;background:#8a8a8a"></div>
<div class="a bdash" style="left:1846px;top:502px;width:11.500px;height:1.500px;background:#8a8a8a"></div>
<div class="card" style="left:230px;top:585.5px;width:546px;height:229px"></div>
<div class="card" style="left:790px;top:585.5px;width:546px;height:229px"></div>
<div class="card" style="left:1350px;top:585.5px;width:546px;height:229px"></div>
<div class="ttl" style="left:245px;top:600px">Total sales by sales channel</div>
<svg class="a" style="left:328px;top:632px" width="160" height="160" viewBox="328 632 160 160"><circle cx="408" cy="712.500" r="71" fill="none" stroke="#33a6eb" stroke-width="15.600"/></svg>
<div class="big" style="left:358px;width:100px;text-align:center;top:694.200px;letter-spacing:.26px;text-indent:.26px">€7.4T</div>
<div class="trend" style="left:356.800px;width:100px;text-align:center;top:715.800px;letter-spacing:.55px"><svg class="ar" viewBox="0 0 10 10"><path d="M2.5 7.5L7.3 2.7M3.4 2.5H7.5V6.6" fill="none" stroke="currentColor" stroke-width="1.7" stroke-linecap="butt"/></svg>45%</div>
<div class="a" style="left:513.900px;top:707.400px;width:10.700px;height:10.700px;background:#33a6eb;border-radius:1.500px"></div>
<div class="t sub" style="left:528px;top:703.200px;font-size:10.800px;letter-spacing:.2px">Online Store</div>
<div class="t sub" style="left:622.500px;top:703.200px;font-size:10.800px;letter-spacing:.1px">€7.4T</div>
<div class="trend" style="left:654px;top:705px;font-size:8.400px;letter-spacing:0"><svg class="ar" style="width:6px;height:6px;margin-right:1px" viewBox="0 0 10 10"><path d="M2.500 7.500L7.300 2.700M3.400 2.500H7.500V6.600" fill="none" stroke="currentColor" stroke-width="1.800"/></svg>45%</div>
<div class="ttl" style="left:805px;top:600px">Average order value over time</div>
<div class="big" style="left:805px;top:624.800px;letter-spacing:.96px">€46.99</div>
<div class="trend" style="left:872px;top:628.800px;color:#4a4a4a;letter-spacing:-.85px"><svg class="ar" viewBox="0 0 10 10"><path d="M2.5 2.5L7.3 7.3M3.4 7.5H7.5V3.4" fill="none" stroke="currentColor" stroke-width="1.7" stroke-linecap="butt"/></svg>11%</div>
<div class="ax" style="left:806.500px;top:657.5px">€100</div>
<div class="ax" style="left:806.500px;top:728.8px">€0</div>
<svg class="a" style="left:0;top:586px" width="1919" height="228" viewBox="0 586 1919 228">
<defs><linearGradient id="ag" x1="0" y1="672" x2="0" y2="737" gradientUnits="userSpaceOnUse"><stop offset="0" stop-color="#4aa9dc" stop-opacity=".045"/><stop offset="1" stop-color="#4aa9dc" stop-opacity="0"/></linearGradient></defs>
<path d="M852 665.500H1318M852 737H1318" stroke="#f0f0f0" stroke-width="1"/>
<path d="M852.0,672.2C876.1,672.2 866.7,708.7 890.8,708.7C914.9,708.7 905.5,700.5 929.6,700.5C953.7,700.5 944.3,702.5 968.4,702.5C992.5,702.5 983.1,706.4 1007.2,706.4C1031.3,706.4 1021.9,699.8 1046.0,699.8C1070.1,699.8 1060.7,704.8 1084.8,704.8C1108.9,704.8 1099.5,706.4 1123.6,706.4C1147.7,706.4 1138.3,707.9 1162.4,707.9C1186.5,707.9 1177.1,703.3 1201.2,703.3C1225.3,703.3 1215.9,706.7 1240.0,706.7C1264.1,706.7 1254.7,703.3 1278.8,703.3C1302.9,703.3 1293.5,737.0 1317.6,737.0L1317.6,737L852.0,737Z" fill="url(#ag)"/>
<path d="M852.0,706.4C876.1,706.4 866.7,708.7 890.8,708.7C914.9,708.7 905.5,695.5 929.6,695.5C953.7,695.5 944.3,701.7 968.4,701.7C992.5,701.7 983.1,701.3 1007.2,701.3C1031.3,701.3 1021.9,695.5 1046.0,695.5C1070.1,695.5 1060.7,698.6 1084.8,698.6C1108.9,698.6 1099.5,693.6 1123.6,693.6C1147.7,693.6 1138.3,706.7 1162.4,706.7C1186.5,706.7 1177.1,697.0 1201.2,697.0C1225.3,697.0 1215.9,686.6 1240.0,686.6C1264.1,686.6 1254.7,704.0 1278.8,704.0C1302.9,704.0 1293.5,711.0 1317.6,711.0" fill="none" stroke="#93c2d8" stroke-width="1.900" stroke-dasharray=".1 4.100" stroke-linecap="round"/>
<path d="M852.0,672.2C876.1,672.2 866.7,708.7 890.8,708.7C914.9,708.7 905.5,700.5 929.6,700.5C953.7,700.5 944.3,702.5 968.4,702.5C992.5,702.5 983.1,706.4 1007.2,706.4C1031.3,706.4 1021.9,699.8 1046.0,699.8C1070.1,699.8 1060.7,704.8 1084.8,704.8C1108.9,704.8 1099.5,706.4 1123.6,706.4C1147.7,706.4 1138.3,707.9 1162.4,707.9C1186.5,707.9 1177.1,703.3 1201.2,703.3C1225.3,703.3 1215.9,706.7 1240.0,706.7C1264.1,706.7 1254.7,703.3 1278.8,703.3C1302.9,703.3 1293.5,737.0 1317.6,737.0" fill="none" stroke="#3a9bcb" stroke-width="1.900" stroke-linecap="round" stroke-linejoin="round"/>
<path d="M912.500 790.500H923" stroke="#3a9bcb" stroke-width="1.800" stroke-linecap="round"/>
<path d="M1067 790.500H1078" stroke="#86bdd6" stroke-width="1.500" stroke-dasharray=".1 3.800" stroke-linecap="round"/>
</svg>
<div class="ax axc" style="left:852.0px;top:747.8px">May 2024</div>
<div class="ax axc" style="left:929.6px;top:747.8px">Jul 2024</div>
<div class="ax axc" style="left:1007.2px;top:747.8px">Sept 2024</div>
<div class="ax axc" style="left:1084.8px;top:747.8px">Nov 2024</div>
<div class="ax axc" style="left:1162.4px;top:747.8px">Jan 2025</div>
<div class="ax axc" style="left:1240.0px;top:747.8px">Mar 2025</div>
<div class="ax lg" style="left:928.400px;top:782.7px">12 May 2024–11 May 2025</div>
<div class="ax lg" style="left:1083.500px;top:782.7px">13 May 2023–11 May 2024</div>
<div class="ttl" style="left:1365px;top:600px">Total sales by product</div>
<div class="t sub pl" style="left:1364.500px;top:625.300px">Crema Reparadora - Piel Seca y Sensible, Con Karité y Caléndula, Crema Facial, pieles sensibles y atópicas ...</div>
<div class="a" style="left:1364.500px;top:644px;width:411.200px;height:29.200px;background:#33a6eb;border-radius:0 2.500px 2.500px 0"></div>
<div class="t sub pv" style="left:1785px;top:650.500px">€644.00</div>
<div class="trend" style="left:1833.300px;top:651.800px;letter-spacing:.1px"><svg class="ar" viewBox="0 0 10 10"><path d="M2.5 7.5L7.3 2.7M3.4 2.5H7.5V6.6" fill="none" stroke="currentColor" stroke-width="1.7" stroke-linecap="butt"/></svg>1.3K%</div>
<div class="a" style="left:1364.500px;top:675.700px;width:29.400px;height:29.500px;background:#96cbea;border-radius:0 2.500px 2.500px 0"></div>
<div class="t sub pv" style="left:1403.200px;top:681.500px">€45.80</div>
<div class="t sub pl" style="left:1364.500px;top:720.600px;letter-spacing:.115px">Crema Regeneradora - Crema de Noche, pieles maduras, Antimanchas, Antiarrugas. crema natural, crema f...</div>
<div class="a" style="left:1364.500px;top:738.200px;width:346.800px;height:29.800px;background:#33a6eb;border-radius:0 2.500px 2.500px 0"></div>
<div class="t sub pv" style="left:1720.600px;top:745.500px">€543.48</div>
<div class="trend" style="left:1768.600px;top:746.600px;letter-spacing:-.1px"><svg class="ar" viewBox="0 0 10 10"><path d="M2.5 7.5L7.3 2.7M3.4 2.5H7.5V6.6" fill="none" stroke="currentColor" stroke-width="1.7" stroke-linecap="butt"/></svg>10%</div>
<div class="a" style="left:1364.500px;top:770px;width:314.600px;height:29.800px;background:#96cbea;border-radius:0 2.500px 2.500px 0"></div>
<div class="t sub pv" style="left:1688.400px;top:777.300px">€492.80</div>
<div class="card" style="left:230px;top:828.5px;width:546px;height:140px"></div>
<div class="card" style="left:790px;top:828.5px;width:546px;height:140px"></div>
<div class="card" style="left:1350px;top:828.5px;width:546px;height:140px"></div>
<div class="ttl" style="left:245px;top:842.700px">Sessions over time</div>
<div class="big" style="left:245px;top:868.300px;letter-spacing:-.05px">14,097</div>
<div class="trend" style="left:306.500px;top:871.500px;letter-spacing:.62px"><svg class="ar" viewBox="0 0 10 10"><path d="M2.5 7.5L7.3 2.7M3.4 2.5H7.5V6.6" fill="none" stroke="currentColor" stroke-width="1.7" stroke-linecap="butt"/></svg>547%</div>
<div class="ax" style="left:247px;top:900.700px">4T</div>
<div class="ax" style="left:247px;top:938.300px">2T</div>
<div class="ttl" style="left:805px;top:842.700px">Conversion rate over time</div>
<div class="big" style="left:805px;top:868.300px;letter-spacing:.66px">0.28%</div>
<div class="dash" style="left:868.500px;top:878.200px"></div>
<div class="ax" style="left:806.500px;top:900.700px">1.5%</div>
<div class="ttl" style="left:1365px;top:842.700px">Conversion rate breakdown</div>
<div class="big" style="left:1365px;top:868.300px;letter-spacing:.66px">0.28%</div>
<div class="dash" style="left:1428.500px;top:878.200px"></div>
<svg class="a" style="left:0;top:829px" width="1919" height="118" viewBox="0 829 1919 118">
<path d="M277.500 908.500H758M853.500 908.500H1318" stroke="#f0f0f0" stroke-width="1"/>
<path d="M550.600 945.500C556 943.200 560 943.400 564 942.900C572 942 580 936.500 590 935.600C597 935 600.500 935 604 937.300C607.500 939.800 609.500 943 611 946.500L611 950L550 950Z" fill="#4aa9dc" fill-opacity=".05"/>
<path d="M550.600 945.500C556 943.200 560 943.400 564 942.900C572 942 580 936.500 590 935.600C597 935 600.500 935 604 937.300C607.500 939.800 609.500 943 611 946.500" fill="none" stroke="#3a9bcb" stroke-width="1.900" stroke-linecap="round"/>
<path d="M1233.500 946C1236 943.600 1242.500 943.600 1245.500 946" fill="none" stroke="#3a9bcb" stroke-width="1.900" stroke-linecap="round"/>
<path d="M1500.500 904.500V947M1637.500 904.500V947M1774.500 904.500V947" stroke="#e3e3e3" stroke-width="1"/>
</svg>
<div class="a" style="left:1365.500px;top:911px;width:12px;height:12px;border-radius:50%;background:#f6f6f6"></div>
<svg class="a" style="left:1367.500px;top:911.500px" width="8" height="11" viewBox="0 0 8 11"><path d="M4.300 .5V10.500M1 5.200L7 3.200M1 8L7 6" fill="none" stroke="#303030" stroke-width="1.250"/></svg>
<div class="t cl" style="left:1382.8px;top:908.200px">Sessions</div>
<div class="t b cv" style="left:1364.7px;top:926.600px">100%</div>
<div class="t sub cn" style="left:1404px;top:926.600px">14,097</div>
<div class="t cl" style="left:1511.4px;top:908.200px">Added to cart</div>
<div class="t b cv" style="left:1511.4px;top:926.600px">2.23%</div>
<div class="t sub cn" style="left:1555.5px;top:926.600px">314</div>
<div class="t cl" style="left:1648.4px;top:908.200px">Reached checkout</div>
<div class="t b cv" style="left:1648.4px;top:926.600px">2.68%</div>
<div class="t sub cn" style="left:1693.7px;top:926.600px">378</div>
<div class="t cl" style="left:1785px;top:908.200px">Completed che...</div>
<div class="t b cv" style="left:1785px;top:926.600px">0.28%</div>
<div class="t sub cn" style="left:1830.3px;top:926.600px">40</div>
<div class="a" style="left:0;top:945px;width:1919px;height:2px;background:#eef1f4;border-top:1px solid #a9b0b8"></div>
</div>
</body></html>
